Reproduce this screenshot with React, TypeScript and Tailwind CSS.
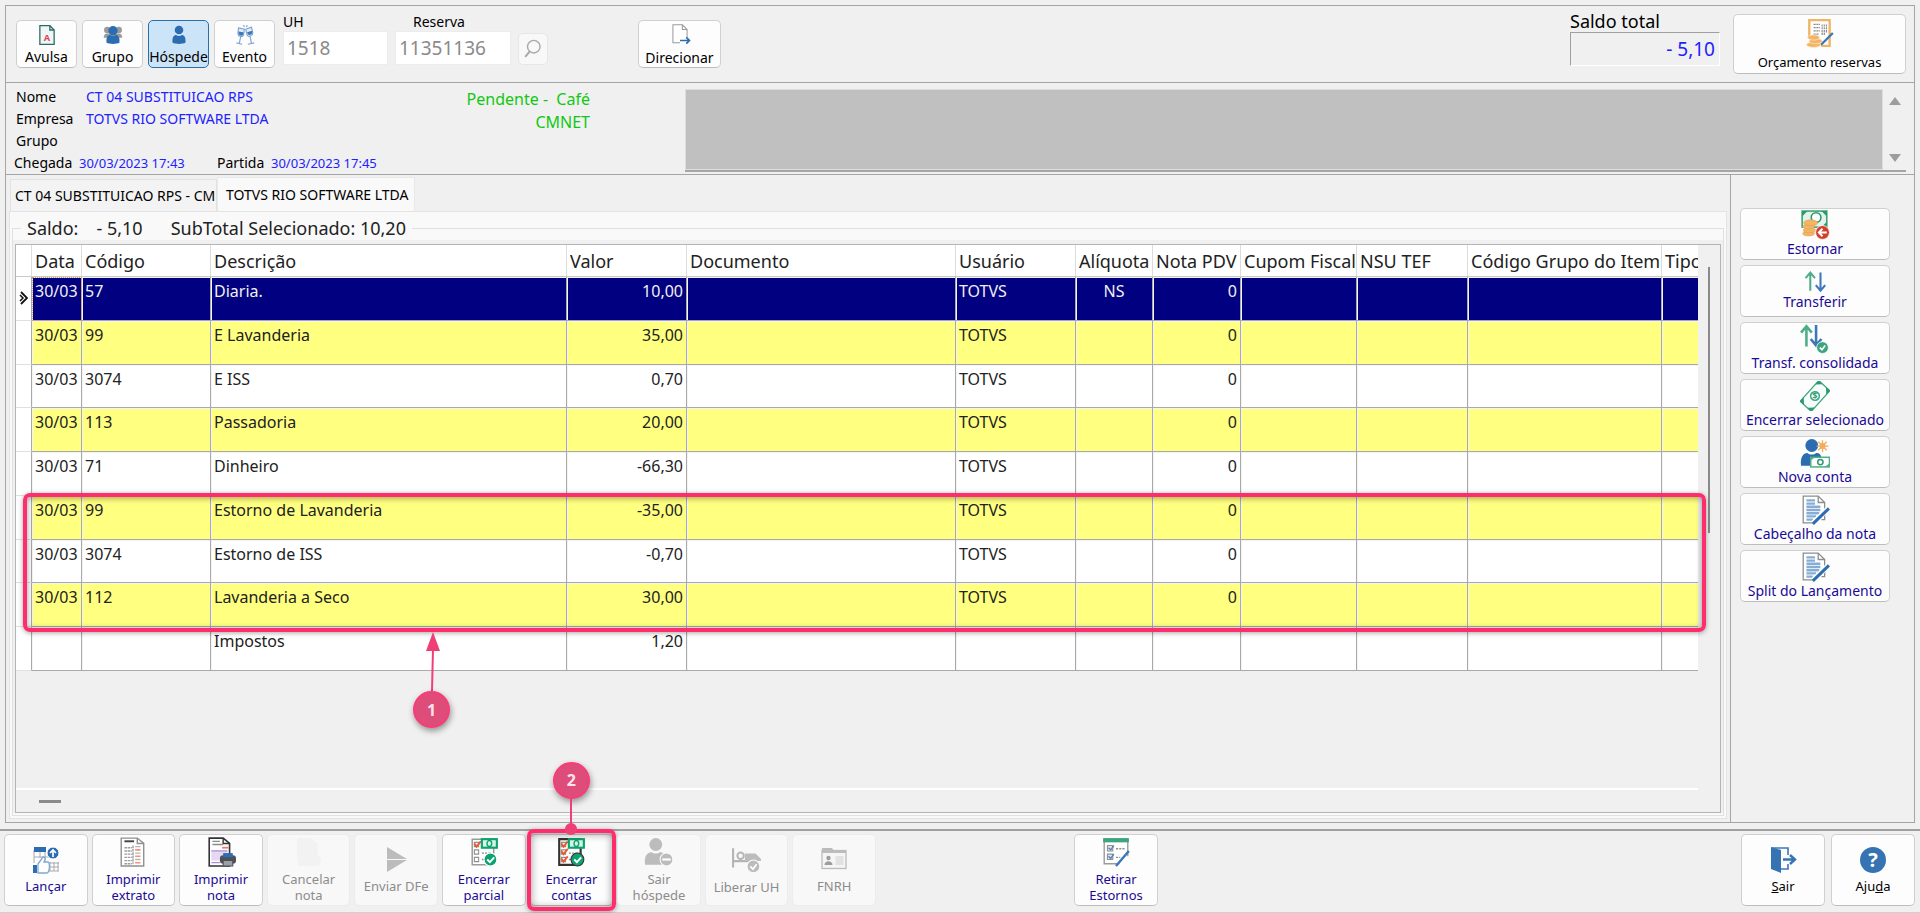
import type { ReactNode } from "react";
import clsx from "clsx";

type IconProps = { size?: number; className?: string };

function Svg({
  size = 28,
  className,
  children,
}: IconProps & { children: ReactNode }) {
  return (
    <svg
      width={size}
      height={size}
      viewBox="0 0 28 28"
      fill="none"
      className={clsx("shrink-0", className)}
      aria-hidden="true"
    >
      {children}
    </svg>
  );
}

function AvulsaIcon() {
  return (
    <Svg size={20}>
      <path d="M4 1h14l6 6v20H4z" fill="#eef7f5" stroke="#2f6b62" strokeWidth="1.8" />
      <path d="M18 1v6h6" stroke="#2f6b62" strokeWidth="1.8" />
      <text x="14" y="22" textAnchor="middle" fontSize="13" fontWeight="700" fill="#e0455a">
        A
      </text>
    </Svg>
  );
}

function GrupoIcon() {
  return (
    <Svg size={20}>
      <g fill="#9a9a9a">
        <circle cx="6" cy="7" r="4.5" />
        <circle cx="22" cy="7" r="4.5" />
        <path d="M1 18c0-4 2-6 5-6h16c3 0 5 2 5 6z" />
      </g>
      <circle cx="14" cy="8" r="6.5" fill="#2c6cb0" />
      <path d="M5 25c-1-8 2-11 5-11 2 2 6 2 8 0 3 0 6 3 5 11-4 2-14 2-18 0z" fill="#2c6cb0" />
    </Svg>
  );
}

function HospedeIcon() {
  return (
    <Svg size={20}>
      <circle cx="14" cy="7" r="6" fill="#2c6cb0" />
      <path d="M5 25c-1-8 2-11 5-11 2 2 6 2 8 0 3 0 6 3 5 11-4 2-14 2-18 0z" fill="#2c6cb0" />
    </Svg>
  );
}

function EventoIcon() {
  return (
    <Svg size={20}>
      <g stroke="#7fa5d1" strokeWidth="1.6" fill="#e4eef9">
        <path d="M5 4l8 2-1 8c-2 4-8 2-8-2zM8 16l-2 10M2 25l8 2" />
        <path d="M23 3l-8 3 2 8c2 4 8 1 8-3zM21 15l2 11M18 27l9-2" />
        <path d="M12 0l1 3M17 0l-1 3" />
      </g>
      <path d="M5 9l7 1-1 4c-1 2-6 1-6-2zM17 10l7-2v3c0 3-5 4-6 2z" fill="#3c77b7" />
    </Svg>
  );
}

function DirecionarIcon() {
  return (
    <Svg size={22}>
      <path d="M14 24H5V1h12l6 6v10" fill="#fff" stroke="#9a9a9a" strokeWidth="1.3" />
      <path d="M17 1v6h6" stroke="#9a9a9a" strokeWidth="1.3" />
      <path d="M14 21h12M22 17l4 4-4 4" stroke="#2c6cb0" strokeWidth="2.2" />
    </Svg>
  );
}

function LupaIcon() {
  return (
    <Svg size={22}>
      <circle cx="15" cy="11" r="8" stroke="#a9a9a9" strokeWidth="1.8" />
      <path d="M10 17l-6 7" stroke="#a9a9a9" strokeWidth="2.6" />
    </Svg>
  );
}

function OrcamentoIcon() {
  return (
    <Svg size={30}>
      <path d="M4 18V2h19v24h-8" fill="#fff" stroke="#f0b466" strokeWidth="2.2" />
      <path
        d="M8 6h6M8 9h6M8 12h6M8 15h5M16 6v10M18 6v10M20 6v8"
        stroke="#8a8a8a"
        strokeWidth="1.1"
        strokeDasharray="2 0.6"
      />
      <g fill="#f2b565" stroke="#fbe3c0" strokeWidth="0.7">
        <ellipse cx="8" cy="25" rx="6.5" ry="2.4" />
        <ellipse cx="10" cy="21.6" rx="6" ry="2.4" />
        <ellipse cx="8" cy="18.2" rx="5.5" ry="2.4" />
      </g>
      <path d="M15 25l11-11" stroke="#3c77b7" strokeWidth="2.2" />
    </Svg>
  );
}

function EstornarIcon() {
  return (
    <Svg size={30}>
      <rect x="2" y="1" width="23" height="15" fill="#e3f3eb" stroke="#3da57d" strokeWidth="1.5" />
      <path d="M2 1h5L2 6zM25 1h-5l5 5zM25 16h-5l5-5z" fill="#2b9a6e" />
      <circle cx="15" cy="7" r="4.5" fill="#fff" stroke="#2b9a6e" strokeWidth="1.5" />
      <g fill="#f2b565" stroke="#e3a050" strokeWidth="0.6">
        <ellipse cx="8" cy="22" rx="5.5" ry="2.2" />
        <ellipse cx="9" cy="19" rx="6" ry="2.2" />
        <ellipse cx="8" cy="15.5" rx="5.5" ry="2.2" />
        <ellipse cx="10" cy="12" rx="6.5" ry="2.8" />
      </g>
      <circle cx="21" cy="21" r="6.5" fill="#d2402c" stroke="#fff" strokeWidth="0.8" />
      <path d="M25 21h-7M21 17.5L17.5 21l3.5 3.5" stroke="#fff" strokeWidth="1.7" />
    </Svg>
  );
}

function TransferirIcon() {
  return (
    <Svg size={22}>
      <path d="M8 25V3M2 9l6-7 6 7" stroke="#4eae87" strokeWidth="2.6" />
      <path d="M21 2v22M15 18l6 7 6-7" stroke="#3c77b7" strokeWidth="2.6" />
    </Svg>
  );
}

function ConsolidadaIcon() {
  return (
    <Svg size={30}>
      <path d="M6 21V2M1 8l5-6 5 6" stroke="#4eae87" strokeWidth="2.4" />
      <path d="M15 1v18M10 14l5 6 5-6" stroke="#3c77b7" strokeWidth="2.4" />
      <circle cx="21" cy="22" r="5.5" fill="#3da57d" stroke="#fff" strokeWidth="0.7" />
      <path d="M18.5 22l2 2 3-4" stroke="#fff" strokeWidth="1.5" />
    </Svg>
  );
}

function CedulaIcon() {
  return (
    <Svg size={30}>
      <g transform="rotate(-48 14 14)" stroke="#3da57d">
        <rect x="1" y="7" width="26" height="14" fill="#f6fcf9" strokeWidth="1.2" />
        <path
          d="M1 7h5l-5 5zM27 7h-5l5 5zM1 21h5l-5-5zM27 21h-5l5-5z"
          fill="#2b9a6e"
          stroke="none"
        />
        <circle cx="14" cy="14" r="4" strokeWidth="1.5" />
      </g>
      <text x="14" y="17" textAnchor="middle" fontSize="8" fontWeight="700" fill="#2b9a6e">
        $
      </text>
    </Svg>
  );
}

function NovaContaIcon() {
  return (
    <Svg size={30}>
      <circle cx="11" cy="7" r="6" fill="#2c6cb0" />
      <path d="M1 26c-1-8 2-12 6-12 2 2 6 2 8 0 3 0 4 1 5 4v8z" fill="#2c6cb0" />
      <path
        d="M21 2v11M15.5 7.5h11M17 3.5l8 8M25 3.5l-8 8"
        stroke="#f0ad5b"
        strokeWidth="1.2"
      />
      <circle cx="21" cy="7.5" r="2.8" fill="#f0ad5b" />
      <rect x="10" y="18" width="17.5" height="9" fill="#fff" stroke="#4eae87" strokeWidth="1.4" />
      <path d="M10 18h4l-4 3zM27 27h-4l4-3z" fill="#4eae87" />
      <circle cx="19" cy="22.5" r="2.5" stroke="#2b9a6e" strokeWidth="1.4" />
    </Svg>
  );
}

function NotaLapisIcon() {
  return (
    <Svg size={30}>
      <path d="M15 26H3V1h14l6 6v16h-3" fill="#fff" stroke="#8d8d8d" strokeWidth="1.2" />
      <path d="M17 1v6h6" stroke="#8d8d8d" strokeWidth="1.2" />
      <path
        d="M6 5h8M6 8h8M6 11h13M6 14h13M6 17h12M6 20h9M6 23h6"
        stroke="#86add6"
        strokeWidth="2.2"
      />
      <path d="M12 26.5L27 12" stroke="#fff" strokeWidth="5" />
      <path d="M12 27L27 12.5" stroke="#2c6cb0" strokeWidth="2.8" />
    </Svg>
  );
}

function LancarIcon() {
  return (
    <Svg size={28}>
      <path
        d="M2 4v13M8 4v8M13 6v10M2 11h15M18 16v9M22 16v9M26 16v9M15 17h12M15 21h12M15 25h12"
        stroke="#a9a9a9"
        strokeWidth="1"
      />
      <rect x="2" y="1" width="12" height="5" fill="#2c6cb0" />
      <circle cx="21" cy="7" r="6" fill="#2c6cb0" stroke="#fff" />
      <path d="M21 11V4M18 7l3-3 3 3" stroke="#fff" strokeWidth="1.7" />
      <path d="M6 18l5-7c3 0 2 3 1 5h4c2 0 2 10-1 11H6z" fill="#fff" stroke="#7fa9d4" strokeWidth="1.3" />
      <rect x="1" y="19" width="4" height="8" fill="#2c6cb0" />
    </Svg>
  );
}

function ExtratoIcon() {
  return (
    <Svg size={30}>
      <path d="M3 1h15l6 5v21H3z" fill="#fff" stroke="#909090" strokeWidth="1.3" />
      <path d="M18 1v5h6" stroke="#909090" strokeWidth="1.3" />
      <path d="M6 4h9" stroke="#444" strokeWidth="1.8" />
      <path
        d="M6 10h7M6 13h7M6 16h7M6 19h7M6 22h7M6 25h7M14 8v17"
        stroke="#9b9b9b"
        strokeWidth="1.3"
        strokeDasharray="2.5 0.6"
      />
      <path d="M16 12h5M16 18h5M16 24h5" stroke="#f0927e" strokeWidth="1.5" />
      <path d="M16 9h5M16 15h5M16 21h5" stroke="#b5b5b5" strokeWidth="1.3" />
    </Svg>
  );
}

function NotaIcon() {
  return (
    <Svg size={30}>
      <path d="M3 1h13l6 5v21H3z" fill="#fff" stroke="#333" strokeWidth="1.5" />
      <path d="M16 1v5h6" stroke="#333" strokeWidth="1.3" />
      <path d="M6 4h7M6 7h10" stroke="#8a8a8a" strokeWidth="1.2" />
      <path d="M15 10h6" stroke="#f07a5e" strokeWidth="1.6" />
      <path d="M5 13h15v9H5z" fill="#e4d8f2" />
      <path d="M5 13h15M5 24h8" stroke="#b08bd6" strokeWidth="1.2" />
      <rect x="13" y="17" width="15" height="8" rx="3" fill="#4d5156" />
      <path d="M16 15h9v4h-9z" fill="#2c6cb0" />
      <path d="M16 22h9v5h-9z" fill="#9ba0a6" stroke="#4d5156" />
    </Svg>
  );
}

function CancelarIcon() {
  return (
    <Svg size={30}>
      <path d="M3 1h13l6 5v11c4 1 5 8 0 10H5c-2-2-1-5-2-7z" fill="#f2f2f2" />
    </Svg>
  );
}

function EnviarIcon() {
  return (
    <Svg size={28}>
      <path d="M5 1l20 12H5zM5 14h20L5 26z" fill="#bcbcbc" />
    </Svg>
  );
}

function EncerrarIcon({ dark = false }: { dark?: boolean }) {
  const line = dark ? "#333" : "#9b9b9b";
  return (
    <Svg size={30}>
      <path d="M20 26H3V2h20v22" fill="#fff" stroke={line} strokeWidth={dark ? 2 : 1.4} />
      <path d="M5 5h4v4H5zM5 12h4v4H5zM5 19h4v4H5z" stroke="#8f8f8f" strokeWidth="1" />
      <path d="M5 6l2 3 4-5" stroke="#ee5b2b" strokeWidth="1.8" />
      {dark && <path d="M5 13l2 3 4-5M5 20l2 3 4-5" stroke="#ee5b2b" strokeWidth="1.8" />}
      <path d="M12 15h8M12 21h4" stroke="#8f8f8f" strokeWidth="1.3" strokeDasharray="2 1" />
      <rect x="11" y="1" width="16" height="10" fill="#0ba36f" />
      <rect x="13" y="3" width="12" height="6" fill="#d9f3e8" />
      <ellipse cx="19" cy="6" rx="2.2" ry="2.8" stroke="#0ba36f" strokeWidth="1.3" />
      <circle cx="20" cy="21" r="6" fill="#0ba36f" stroke={dark ? "#333" : "#fff"} strokeWidth="1" />
      <path d="M17 21l2.5 2.5L23.5 19" stroke="#fff" strokeWidth="1.8" />
    </Svg>
  );
}

function SairHospedeIcon() {
  return (
    <Svg size={30}>
      <circle cx="11" cy="7" r="6" fill="#bcbcbc" />
      <path d="M1 26c-1-9 2-11 6-12 2 2 6 2 8 0 4 1 6 3 6 12z" fill="#bcbcbc" />
      <circle cx="21" cy="21" r="6" fill="#bcbcbc" stroke="#fafafa" />
      <path d="M17 21h8" stroke="#fff" strokeWidth="2" />
    </Svg>
  );
}

function LiberarIcon() {
  return (
    <Svg size={30}>
      <path d="M1 3v18M1 15h16" stroke="#b5b5b5" strokeWidth="2" />
      <circle cx="8" cy="10" r="3" stroke="#b5b5b5" strokeWidth="1.8" />
      <path d="M12 8h10l5 5v2H12z" fill="#bcbcbc" />
      <circle cx="20" cy="20" r="6" fill="#bcbcbc" stroke="#fafafa" />
      <path d="M17 20l2.5 2.5L23 18" stroke="#fff" strokeWidth="1.6" />
    </Svg>
  );
}

function FnrhIcon() {
  return (
    <Svg size={28}>
      <path d="M2 5V2h10l2 3" fill="#bcbcbc" />
      <rect x="2" y="4.5" width="24" height="18" fill="#f5f5f5" stroke="#bcbcbc" strokeWidth="1.3" />
      <path d="M2 5h24v2H2z" fill="#bcbcbc" />
      <circle cx="8.5" cy="12" r="2.2" fill="#9d9d9d" />
      <path d="M4.5 19c0-5 8-5 8 0z" fill="#9d9d9d" />
      <path d="M15.5 10h8v9h-8z" fill="#e2e2e2" />
    </Svg>
  );
}

function RetirarIcon() {
  return (
    <Svg size={30}>
      <path d="M17 25H3V3h22v15" fill="#fff" stroke="#9b9b9b" strokeWidth="1.3" />
      <path d="M2 1h24v4H2z" fill="#3da57d" />
      <path d="M6 8h5v5H6zM6 16h5v5H6z" fill="#dfe6ee" stroke="#8f8f8f" />
      <path d="M7 10l2 2 3-4M7 18l2 2 3-4" stroke="#4a7fb9" strokeWidth="1.2" />
      <path d="M14 11h8M14 19h4" stroke="#8f8f8f" strokeWidth="1.3" strokeDasharray="2 1" />
      <path d="M14 27l12-14" stroke="#3c77b7" strokeWidth="2.3" />
    </Svg>
  );
}

function SairIcon() {
  return (
    <Svg size={28}>
      <path d="M3 2h16v7M19 18v5h-7" stroke="#3c77b7" strokeWidth="1.6" />
      <path d="M2 1l10 3v23L2 23z" fill="#3673b3" />
      <path d="M14 13.5h12M21 9l5 4.5-5 4.5" stroke="#3673b3" strokeWidth="2.4" />
    </Svg>
  );
}

function AjudaIcon() {
  return (
    <Svg size={28}>
      <circle cx="14" cy="14" r="13" fill="#3673b3" />
      <text x="14" y="21" textAnchor="middle" fontSize="20" fontWeight="700" fill="#fff">
        ?
      </text>
    </Svg>
  );
}

const toolbarButtons = [
  { label: "Avulsa", icon: <AvulsaIcon /> },
  { label: "Grupo", icon: <GrupoIcon /> },
  { label: "Hóspede", icon: <HospedeIcon />, active: true },
  { label: "Evento", icon: <EventoIcon /> },
];

const sideButtons = [
  { label: "Estornar", icon: <EstornarIcon /> },
  { label: "Transferir", icon: <TransferirIcon /> },
  { label: "Transf. consolidada", icon: <ConsolidadaIcon /> },
  { label: "Encerrar selecionado", icon: <CedulaIcon /> },
  { label: "Nova conta", icon: <NovaContaIcon /> },
  { label: "Cabeçalho da nota", icon: <NotaLapisIcon /> },
  { label: "Split do Lançamento", icon: <NotaLapisIcon /> },
];

const bottomButtons = [
  { label: "Lançar", icon: <LancarIcon /> },
  { label: "Imprimir extrato", icon: <ExtratoIcon /> },
  { label: "Imprimir nota", icon: <NotaIcon /> },
  { label: "Cancelar nota", icon: <CancelarIcon />, disabled: true },
  { label: "Enviar DFe", icon: <EnviarIcon />, disabled: true },
  { label: "Encerrar parcial", icon: <EncerrarIcon /> },
  { label: "Encerrar contas", icon: <EncerrarIcon dark />, marked: true },
  { label: "Sair hóspede", icon: <SairHospedeIcon />, disabled: true },
  { label: "Liberar UH", icon: <LiberarIcon />, disabled: true },
  { label: "FNRH", icon: <FnrhIcon />, disabled: true },
];

const columns = [
  { title: "", width: "w-[16px]" },
  { title: "Data", width: "w-[50px]" },
  { title: "Código", width: "w-[129px]" },
  { title: "Descrição", width: "w-[356px]" },
  { title: "Valor", width: "w-[120px]" },
  { title: "Documento", width: "w-[269px]" },
  { title: "Usuário", width: "w-[120px]" },
  { title: "Alíquota", width: "w-[77px]" },
  { title: "Nota PDV", width: "w-[88px]" },
  { title: "Cupom Fiscal", width: "w-[116px]" },
  { title: "NSU TEF", width: "w-[111px]" },
  { title: "Código Grupo do Item", width: "w-[194px]" },
  { title: "Tipo", width: "w-[60px]" },
];

const rows = [
  ["30/03", "57", "Diaria.", "10,00", "TOTVS", "NS", "0"],
  ["30/03", "99", "E Lavanderia", "35,00", "TOTVS", "", "0"],
  ["30/03", "3074", "E ISS", "0,70", "TOTVS", "", "0"],
  ["30/03", "113", "Passadoria", "20,00", "TOTVS", "", "0"],
  ["30/03", "71", "Dinheiro", "-66,30", "TOTVS", "", "0"],
  ["30/03", "99", "Estorno de Lavanderia", "-35,00", "TOTVS", "", "0"],
  ["30/03", "3074", "Estorno de ISS", "-0,70", "TOTVS", "", "0"],
  ["30/03", "112", "Lavanderia a Seco", "30,00", "TOTVS", "", "0"],
  ["", "", "Impostos", "1,20", "", "", ""],
];

const face =
  "flex flex-col items-center rounded-[5px] border border-[#d0d0d0] border-b-[#bdbdbd] bg-[#fdfdfd]";

function Toolbar() {
  return (
    <div className="flex h-[77px] items-center border-b border-[#a5a5a5] pr-[8px] pl-[10px]">
      <div className="flex gap-[5px]">
        {toolbarButtons.map((b) => (
          <button
            key={b.label}
            className={clsx(
              "flex h-[48px] w-[61px] flex-col items-center justify-end rounded-[5px] border pb-[1px] text-[14px] leading-[18px] text-black",
              b.active
                ? "border-[#2a6ea8] bg-[#cce4f7]"
                : "border-[#d0d0d0] border-b-[#bdbdbd] bg-[#fdfdfd]",
            )}
          >
            {b.icon}
            <span className="mt-[3px]">{b.label}</span>
          </button>
        ))}
      </div>
      <div className="ml-[8px] flex gap-[7px] pb-[10px]">
        <div>
          <label htmlFor="uh" className="block text-[14px] leading-[18px]">
            UH
          </label>
          <input
            id="uh"
            defaultValue="1518"
            className="block h-[34px] w-[105px] border border-[#ececec] bg-white px-[3px] text-[19px] text-[#8a8a8a]"
          />
        </div>
        <div>
          <label htmlFor="reserva" className="block pl-[18px] text-[14px] leading-[18px]">
            Reserva
          </label>
          <input
            id="reserva"
            defaultValue="11351136"
            className="block h-[34px] w-[116px] border border-[#ececec] bg-white px-[3px] text-[19px] text-[#8a8a8a]"
          />
        </div>
        <button
          aria-label="Pesquisar"
          className="flex h-[32px] w-[30px] items-center justify-center self-end rounded-[5px] border border-[#e6e6e6] bg-[#f8f8f8]"
        >
          <LupaIcon />
        </button>
      </div>
      <button
        className={clsx(
          face,
          "ml-[90px] h-[48px] w-[83px] justify-end text-[14px] leading-[18px]",
        )}
      >
        <DirecionarIcon />
        <span className="mt-[3px]">Direcionar</span>
      </button>
      <div className="ml-auto pb-[12px]">
        <label htmlFor="saldo-total" className="block text-[18px] leading-[22px]">
          Saldo total
        </label>
        <input
          id="saldo-total"
          readOnly
          value="- 5,10"
          className="block h-[34px] w-[150px] border border-t-[#a0a0a0] border-r-white border-b-white border-l-[#a0a0a0] px-[4px] text-right text-[19px] text-[#2222ff]"
        />
      </div>
      <button
        className={clsx(
          face,
          "ml-[13px] h-[60px] w-[173px] justify-end pb-[2px] text-[13px] leading-[18px]",
        )}
      >
        <OrcamentoIcon />
        <span className="mt-[5px]">Orçamento reservas</span>
      </button>
    </div>
  );
}

function GuestInfo() {
  return (
    <div className="flex items-center border-b border-[#a5a5a5] pt-[3px] pr-[8px]">
      <dl className="w-[460px] text-[14px] leading-[22px] text-black">
        <div className="flex pl-[10px]">
          <dt className="w-[70px]">Nome</dt>
          <dd className="text-[#2222ff]">CT 04 SUBSTITUICAO RPS</dd>
        </div>
        <div className="flex pl-[10px]">
          <dt className="w-[70px]">Empresa</dt>
          <dd className="text-[#2222ff]">TOTVS RIO SOFTWARE LTDA</dd>
        </div>
        <div className="flex pl-[10px]">
          <dt>Grupo</dt>
        </div>
        <div className="flex pl-[8px]">
          <dt className="w-[65px]">Chegada</dt>
          <dd className="w-[138px] text-[13px] text-[#2222ff]">30/03/2023 17:43</dd>
          <dt className="w-[54px]">Partida</dt>
          <dd className="text-[13px] text-[#2222ff]">30/03/2023 17:45</dd>
        </div>
      </dl>
      <div className="w-[124px] self-start pt-[2px] text-right text-[16px] leading-[23px] whitespace-pre text-[#11c811]">
        <p>Pendente -  Café</p>
        <p>CMNET</p>
      </div>
      <div className="ml-[95px] flex h-[83px] flex-1 border-b-2 border-b-[#a5a5a5]">
        <textarea
          aria-label="Observações"
          readOnly
          className="block h-full flex-1 resize-none border border-[#ddd] bg-[#c0c0c0]"
        />
        <div className="flex w-[23px] flex-col items-center justify-between py-[8px]">
          <svg width="12" height="9" viewBox="0 0 12 9">
            <path d="M6 0l6 8H0z" fill="#9d9d9d" />
          </svg>
          <svg width="12" height="9" viewBox="0 0 12 9">
            <path d="M0 1h12L6 9z" fill="#9d9d9d" />
          </svg>
        </div>
      </div>
    </div>
  );
}

function LedgerRow({ row, index }: { row: string[]; index: number }) {
  const selected = index === 0;
  const [date, code, description, value, user, rate, note] = row;
  const cell = clsx(
    "border-r border-b border-[#a9a9a9] px-[3px] pt-[2px] align-top text-[16px] leading-[24px] whitespace-nowrap shadow-[inset_1px_1px_0_#f4f4f4]",
    selected
      ? "bg-[#000080] text-[#f0f0f0]"
      : index % 2 === 1
        ? "bg-[#ffff80] text-[#222]"
        : "bg-white text-[#222]",
  );

  return (
    <tr>
      <td className="border-r border-b border-r-[#a9a9a9] border-b-[#e0e0e0] bg-white">
        {selected && (
          <svg width="9" height="14" viewBox="0 0 9 14" className="mx-auto" fill="none">
            <path d="M2 1l6 6-6 6" stroke="#111" strokeWidth="1.8" />
            <path d="M1 4l3 3-3 3" stroke="#111" strokeWidth="1.5" />
          </svg>
        )}
      </td>
      <td
        className={clsx(
          cell,
          selected && "outline-1 -outline-offset-1 outline-[#e0a050] outline-dotted",
        )}
      >
        {date}
      </td>
      <td className={cell}>{code}</td>
      <td className={cell}>{description}</td>
      <td className={clsx(cell, "text-right")}>{value}</td>
      <td className={cell}></td>
      <td className={cell}>{user}</td>
      <td className={clsx(cell, "text-center")}>{rate}</td>
      <td className={clsx(cell, "text-right")}>{note}</td>
      <td className={cell}></td>
      <td className={cell}></td>
      <td className={cell}></td>
      <td className={cell}></td>
    </tr>
  );
}

function Ledger() {
  return (
    <div className="relative mx-[2px] mt-[4px] flex flex-1 border border-[#b4b4b8]">
      <div className="flex min-w-0 flex-1 flex-col">
        <div className="w-full flex-1 overflow-hidden border-b-2 border-white">
          <table className="h-[426px] w-[1706px] table-fixed border-separate border-spacing-0">
            <thead>
              <tr className="h-[32px]">
                {columns.map((c) => (
                  <th
                    key={c.title}
                    className={clsx(
                      c.width,
                      "border-r border-b border-r-[#dcdcdc] border-b-[#c8c8c8] bg-white pl-[3px] text-left text-[18px] leading-[24px] font-normal whitespace-nowrap text-[#222]",
                    )}
                  >
                    {c.title}
                  </th>
                ))}
              </tr>
            </thead>
            <tbody>
              {rows.map((row, i) => (
                <LedgerRow key={i} row={row} index={i} />
              ))}
            </tbody>
          </table>
        </div>
        <div className="flex h-[22px] items-center pl-[23px]">
          <div className="h-[3px] w-[22px] bg-[#8a8a8a]" />
        </div>
      </div>
      <div className="w-[22px] shrink-0 pt-[22px]">
        <div className="mx-auto h-[266px] w-[2px] bg-[#8a8a8a]" />
      </div>

      {/* step 1: rows created by the reversal */}
      <div className="pointer-events-none absolute top-[248px] right-[14px] left-[7px] h-[139px] rounded-[7px] border-4 border-[#ff2d6b] shadow-[0_1px_5px_rgba(0,0,0,0.35),inset_0_1px_6px_rgba(0,0,0,0.4)]" />
      <div className="pointer-events-none absolute top-[386px] left-[397px] flex flex-col items-center">
        <svg width="36" height="60" viewBox="0 0 36 60">
          <path d="M19 18L18 60" stroke="#ee3f76" strokeWidth="2" />
          <path d="M19 1l7 19H12z" fill="#ee3f76" />
        </svg>
        <StepBadge>1</StepBadge>
      </div>
    </div>
  );
}

function StepBadge({ children }: { children: ReactNode }) {
  return (
    <span className="flex h-[37px] w-[37px] items-center justify-center rounded-full border-2 border-[#fb3a77] bg-[#de4c79] text-[16px] leading-[20px] font-bold text-[#ffe3ec] shadow-[1px_3px_6px_rgba(0,0,0,0.4)]">
      {children}
    </span>
  );
}

function AccountTabs() {
  return (
    <div className="flex min-w-0 flex-1 flex-col pr-[3px] pb-[3px] pl-[3px]">
      <div className="flex h-[36px] items-end pl-[1px] text-[14px]" role="tablist">
        <button
          role="tab"
          className="h-[32px] w-[207px] border border-b-0 border-[#e2e2e2] bg-[#f3f3f3] pl-[4px] text-left whitespace-nowrap"
        >
          CT 04 SUBSTITUICAO RPS - CM
        </button>
        <button
          role="tab"
          aria-selected="true"
          className="h-[34px] w-[198px] border border-b-0 border-[#e8e8e8] bg-[#f9f9f9] pl-[8px] text-left whitespace-nowrap"
        >
          TOTVS RIO SOFTWARE LTDA
        </button>
      </div>
      <div className="flex flex-1 flex-col border border-[#e4e4e4] bg-[#f9f9f9] px-[2px] pt-[4px] pb-[2px]">
        <fieldset className="flex min-w-0 flex-1 flex-col border border-[#e0e0e0] pb-[2px]">
          <legend className="ml-[8px] px-[6px] text-[18px] leading-[24px] whitespace-pre text-[#222]">
            <span>Saldo:</span>
            <span className="ml-[18px]">- 5,10</span>
            <span className="ml-[28px]">SubTotal Selecionado: 10,20</span>
          </legend>
          <div className="flex flex-1 flex-col bg-[#f0f0f0]">
            <Ledger />
          </div>
        </fieldset>
      </div>
    </div>
  );
}

function SideActions() {
  return (
    <div className="flex w-[184px] shrink-0 flex-col gap-[5px] border-l border-[#a5a5a5] pt-[33px] pr-[24px] pl-[9px]">
      {sideButtons.map((b) => (
        <button
          key={b.label}
          className={clsx(
            face,
            "h-[52px] justify-center text-[14px] leading-[18px] whitespace-nowrap text-[#1a0a96]",
          )}
        >
          {b.icon}
          {b.label}
        </button>
      ))}
    </div>
  );
}

function BottomBar() {
  return (
    <div className="mt-[6px] flex h-[84px] items-center border-t-2 border-b border-t-[#a0a0a0] border-b-[#d0d0d0] pr-[5px] pb-[4px] pl-[4px] text-[13px] leading-[16px]">
      <div className="grid w-[872px] grid-cols-10 gap-[4px]">
        {bottomButtons.map((b) => (
          <div key={b.label} className="relative">
            <button
              disabled={b.disabled}
              className={clsx(
                "flex h-[72px] w-full flex-col items-center justify-center rounded-[5px] border px-[5px]",
                b.disabled
                  ? "border-[#ececec] bg-[#f8f8f8] text-[#8c8c8c]"
                  : "border-[#d0d0d0] border-b-[#bdbdbd] bg-[#fdfdfd] text-[#1a0a96]",
              )}
            >
              {b.icon}
              <span className="mt-[4px]">{b.label}</span>
            </button>
            {b.marked && (
              <>
                {/* step 2: close the accounts */}
                <div className="pointer-events-none absolute -inset-x-[3px] -inset-y-[5px] rounded-[7px] border-4 border-[#ff2d6b] shadow-[0_1px_5px_rgba(0,0,0,0.35),inset_0_1px_8px_rgba(0,0,0,0.4)]" />
                <div className="pointer-events-none absolute inset-x-0 -top-[72px] flex flex-col items-center">
                  <StepBadge>2</StepBadge>
                  <svg width="36" height="36" viewBox="0 0 36 36">
                    <path d="M18 0v30" stroke="#ee3f76" strokeWidth="2" />
                    <circle cx="18" cy="30" r="6" fill="#ee3f76" />
                  </svg>
                </div>
              </>
            )}
          </div>
        ))}
      </div>
      <button className={clsx(face, "ml-[198px] h-[72px] w-[84px] justify-center px-[12px] text-[#1a0a96]")}>
        <RetirarIcon />
        <span className="mt-[4px]">Retirar Estornos</span>
      </button>
      <div className="ml-auto flex gap-[6px] text-black">
        <button className={clsx(face, "h-[72px] w-[84px] justify-center")}>
          <SairIcon />
          <span className="mt-[4px]">
            <u>S</u>air
          </span>
        </button>
        <button className={clsx(face, "h-[72px] w-[84px] justify-center")}>
          <AjudaIcon />
          <span className="mt-[4px]">
            Aju<u>d</u>a
          </span>
        </button>
      </div>
    </div>
  );
}

export default function App() {
  return (
    <div className="flex min-h-screen flex-col bg-[#f0f0f0] font-['Noto_Sans','Open_Sans',sans-serif] text-black">
      <div className="mx-[5px] mt-[5px] flex flex-1 flex-col border border-[#a5a5a5]">
        <Toolbar />
        <GuestInfo />
        <div className="flex flex-1">
          <AccountTabs />
          <SideActions />
        </div>
      </div>
      <BottomBar />
    </div>
  );
}
